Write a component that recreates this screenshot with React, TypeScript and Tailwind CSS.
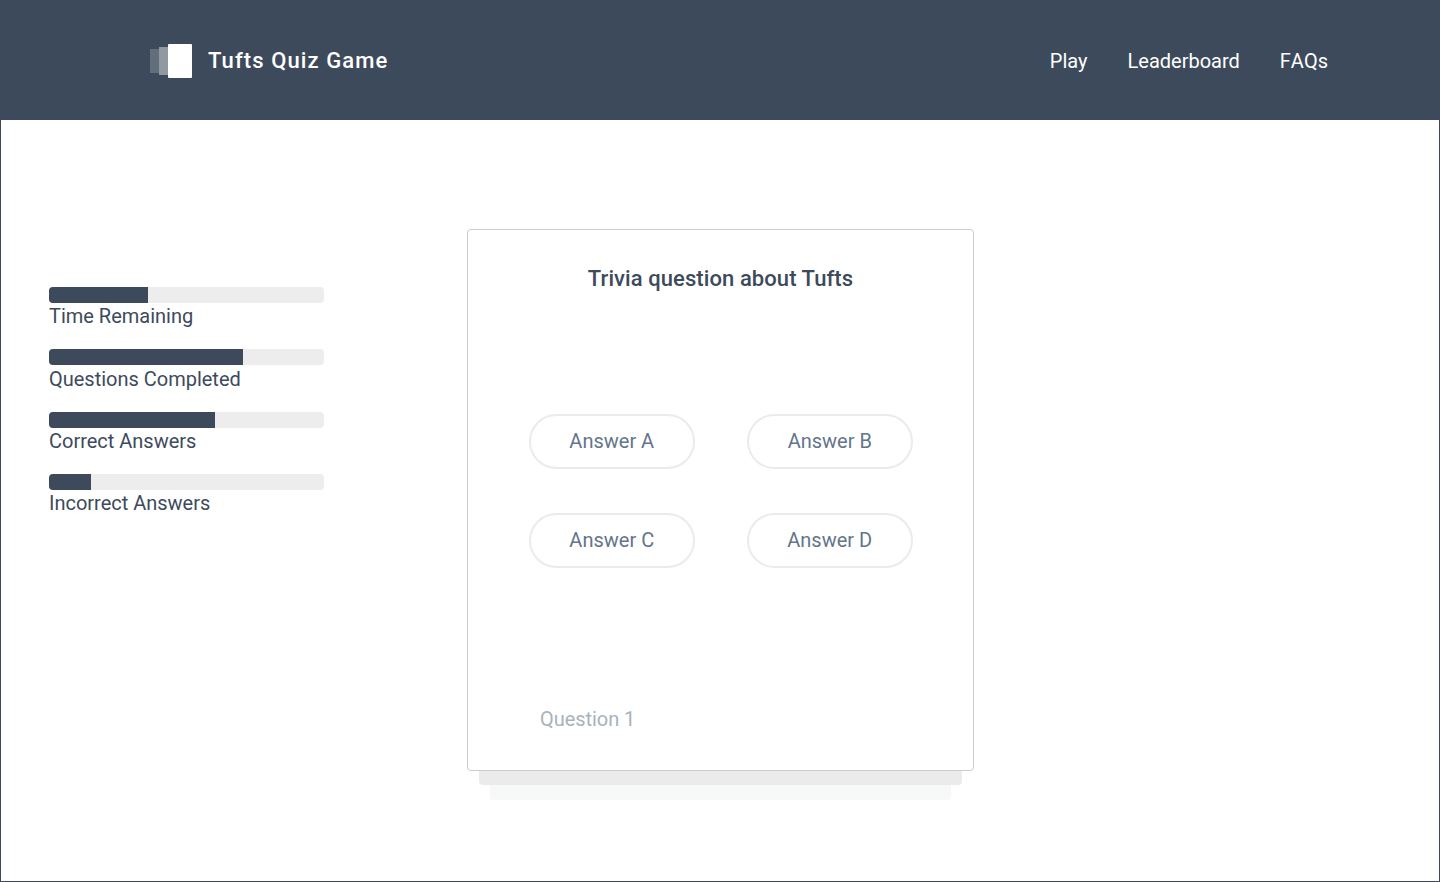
const stats = [
  { label: 'Time Remaining', width: 99 },
  { label: 'Questions Completed', width: 194 },
  { label: 'Correct Answers', width: 166 },
  { label: 'Incorrect Answers', width: 42 },
];

const answers = ['Answer A', 'Answer B', 'Answer C', 'Answer D'];

function Logo() {
  return (
    <svg width="42" height="34" viewBox="0 0 42 34" aria-hidden="true">
      <rect x="0" y="5" width="9" height="24" fill="#fff" fillOpacity="0.2" />
      <rect x="9" y="3" width="9" height="28" fill="#fff" fillOpacity="0.43" />
      <rect x="18" y="0" width="24" height="34" rx="1" fill="#fff" />
    </svg>
  );
}

function Header() {
  return (
    <header className="flex h-[120px] items-center justify-between bg-[#3d4a5c] pl-[150px] pr-28 pt-0.5 text-white">
      <div className="flex items-center gap-4">
        <Logo />
        <span className="text-[22px] leading-[26px] font-medium tracking-[1.1px]">Tufts Quiz Game</span>
      </div>
      <nav className="flex gap-10 text-[20px] leading-6">
        <a>Play</a>
        <a>Leaderboard</a>
        <a className="[font-kerning:none]">FAQs</a>
      </nav>
    </header>
  );
}

function Stats() {
  return (
    <aside className="mt-[167px] ml-12 w-[275px]">
      {stats.map((s) => (
        <div key={s.label} className="h-[62.33px]">
          <div className="h-4 overflow-hidden rounded bg-[#ededed]">
            <div className="h-full bg-[#3d4a5c]" style={{ width: s.width }} />
          </div>
          <p className="pt-[1.3px] text-[20px] leading-6 tracking-[-0.01px] text-[#3d4a5c]">{s.label}</p>
        </div>
      ))}
    </aside>
  );
}

function QuestionCard() {
  return (
    <section className="mt-[109px] ml-[143px] flex w-[507px] flex-col items-center">
      <div className="flex h-[542px] w-full flex-col rounded border border-[#ccc] bg-white">
        <h1 className="mt-9 text-center text-[22px] leading-[26px] font-medium tracking-[0.08px] text-[#3d4a5c]">
          Trivia question about Tufts
        </h1>
        <div className="mt-[122px] ml-[61px] grid grid-cols-[165.5px_165.5px] gap-x-[52.5px] gap-y-11">
          {answers.map((a) => (
            <button key={a} className="h-[55px] rounded-full border-2 border-[#ebebeb] pb-0.5 text-[20px] leading-6 text-[#62758a]">
              {a}
            </button>
          ))}
        </div>
        <p className="mt-[139px] ml-[72px] text-[20px] leading-6 tracking-[-0.05px] text-[#a9b2bd]">Question 1</p>
      </div>
      <div className="h-3.5 w-[483px] rounded-b bg-[#ebebeb]" />
      <div className="h-[15px] w-[461px] rounded-b bg-[#f7f9f8]" />
    </section>
  );
}

export default function App() {
  return (
    <div className="flex h-[882px] w-[1440px] flex-col bg-white font-['Roboto',sans-serif]">
      <Header />
      <main className="flex flex-1 items-start border-x border-b border-[#3d4a5c]">
        <Stats />
        <QuestionCard />
      </main>
    </div>
  );
}
